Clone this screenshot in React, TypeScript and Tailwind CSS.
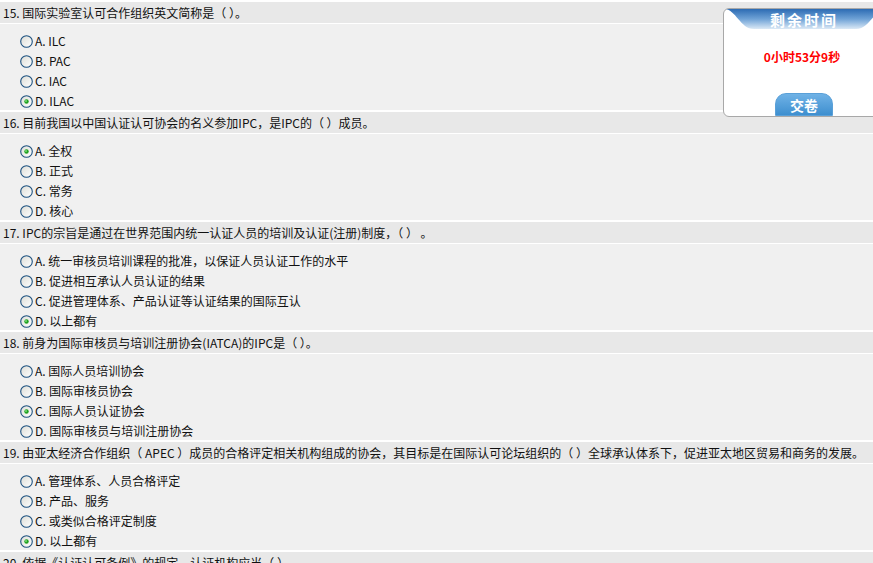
import React from "react";

interface Question {
	no: number;
	text: string;
	options: string[];
	checked: number;
}

const questions: Question[] = [
	{
		no: 15,
		text: "国际实验室认可合作组织英文简称是（ ）。",
		options: ["ILC", "PAC", "IAC", "ILAC"],
		checked: 3,
	},
	{
		no: 16,
		text: "目前我国以中国认证认可协会的名义参加IPC，是IPC的（ ）成员。",
		options: ["全权", "正式", "常务", "核心"],
		checked: 0,
	},
	{
		no: 17,
		text: "IPC的宗旨是通过在世界范围内统一认证人员的培训及认证(注册)制度，（ ） 。",
		options: [
			"统一审核员培训课程的批准，以保证人员认证工作的水平",
			"促进相互承认人员认证的结果",
			"促进管理体系、产品认证等认证结果的国际互认",
			"以上都有",
		],
		checked: 3,
	},
	{
		no: 18,
		text: "前身为国际审核员与培训注册协会(IATCA)的IPC是（ ）。",
		options: ["国际人员培训协会", "国际审核员协会", "国际人员认证协会", "国际审核员与培训注册协会"],
		checked: 2,
	},
	{
		no: 19,
		text: "由亚太经济合作组织（ APEC ）成员的合格评定相关机构组成的协会，其目标是在国际认可论坛组织的（ ）全球承认体系下，促进亚太地区贸易和商务的发展。",
		options: ["管理体系、人员合格评定", "产品、服务", "或类似合格评定制度", "以上都有"],
		checked: 3,
	},
	{
		no: 20,
		text: "依据《认证认可条例》的规定，认证机构应当（ ）。",
		options: [],
		checked: -1,
	},
];

const letters = ["A", "B", "C", "D"];

function Radio({ on }: { on: boolean }) {
	return (
		<svg width="13" height="13" viewBox="0 0 13 13" className="shrink-0">
			<defs>
				<linearGradient id="rb" x1="0" y1="0" x2="1" y2="1">
					<stop offset="0" stopColor="#dcdcd6" />
					<stop offset="1" stopColor="#ffffff" />
				</linearGradient>
			</defs>
			<circle cx="6.5" cy="6.5" r="5.8" fill="url(#rb)" stroke="#1c5180" strokeWidth="1.1" />
			{on && <circle cx="6.5" cy="6.5" r="2.2" fill="#21a121" />}
			{on && <circle cx="6" cy="6" r="0.9" fill="#7fe07f" />}
		</svg>
	);
}

function QuestionBlock({ q }: { q: Question }) {
	return (
		<div className="border-t-2 border-white">
			<div className="h-[22px] leading-[22px] bg-[#e8e8e8] pl-[3px] border-b border-white whitespace-nowrap">
				{q.no}. {q.text}
			</div>
			{q.options.length > 0 && (
				<div className="h-[86px] pt-[7px]">
					{q.options.map((o, i) => (
						<div key={i} className="h-[20px] flex items-center pl-[20px] gap-[2px]">
							<Radio on={i === q.checked} />
							<span>
								{letters[i]}. {o}
							</span>
						</div>
					))}
				</div>
			)}
		</div>
	);
}

function TimerBox() {
	return (
		<div className="absolute left-[723px] top-[8px] w-[162px] h-[109px] bg-white border border-[#a8a8a8] rounded-[6px] overflow-hidden">
			<svg width="162" height="21" viewBox="0 0 162 21" className="absolute left-0 top-0">
				<defs>
					<linearGradient id="hd" x1="0" y1="0" x2="0" y2="1">
						<stop offset="0" stopColor="#2c6bb3" />
						<stop offset="0.5" stopColor="#6fa2d6" />
						<stop offset="1" stopColor="#dbe9f6" />
					</linearGradient>
				</defs>
				<path d="M0,0 H162 C150,0 146,20 132,20 H30 C16,20 12,0 0,0 Z" fill="url(#hd)" />
			</svg>
			<div className="relative h-[21px] leading-[21px] text-center text-white font-bold text-[15px] tracking-[2px]">
				剩余时间
			</div>
			<div className="mt-[19px] text-center text-[#ff0000] font-bold text-[12px] leading-[16px] pr-[4px]">
				0小时53分9秒
			</div>
			<div className="absolute left-[51px] bottom-0 w-[58px] h-[23px] rounded-t-[11px] bg-gradient-to-b from-[#6fb2e6] to-[#3d8fcf] border border-[#5aa0d8] text-white font-bold text-[14px] leading-[22px] text-center">
				交卷
			</div>
		</div>
	);
}

export default function App() {
	return (
		<div
			className="relative w-[873px] h-[563px] overflow-hidden bg-[#f0f0f0] text-[12px] text-[#111]"
			style={{ fontFamily: '"Noto Sans CJK SC", "Noto Sans", sans-serif' }}
		>
			{questions.map((q) => (
				<QuestionBlock key={q.no} q={q} />
			))}
			<TimerBox />
		</div>
	);
}
